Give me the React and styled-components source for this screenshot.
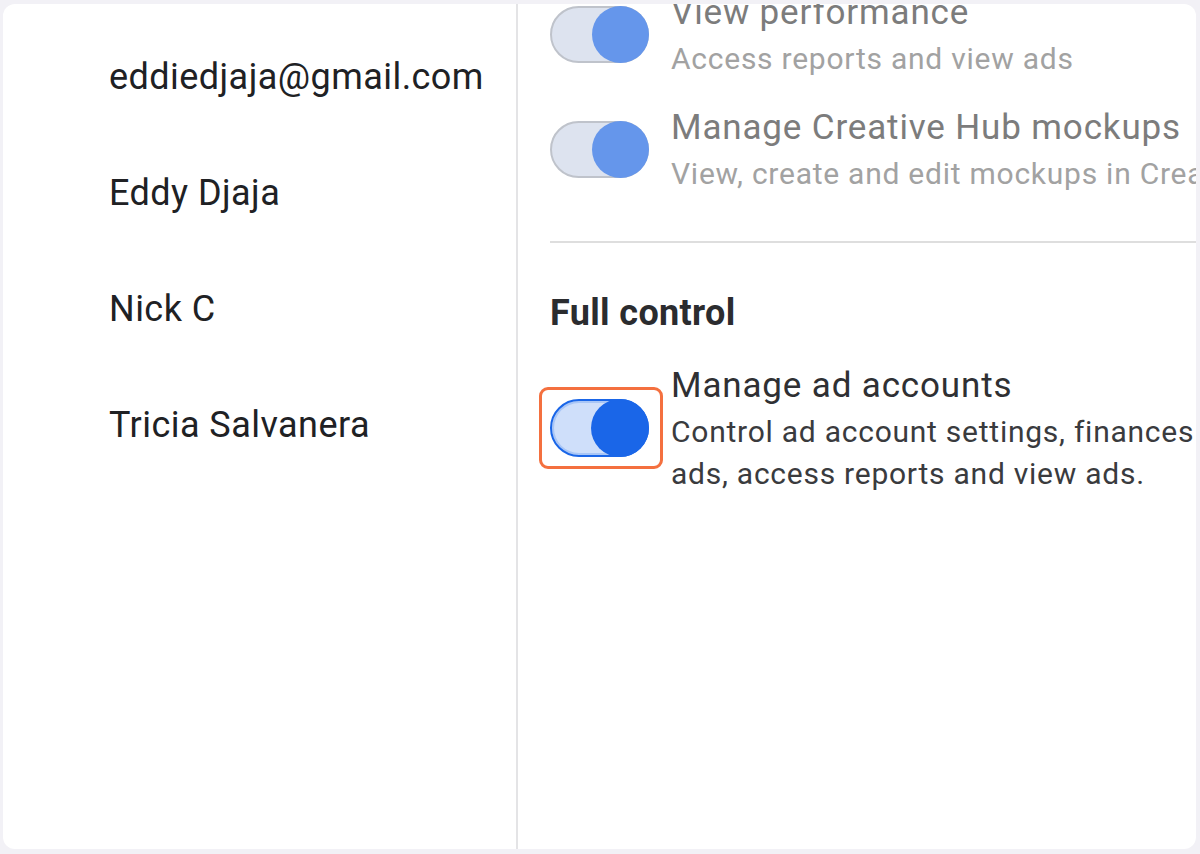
import React from 'react'
import styled, { createGlobalStyle, css } from 'styled-components'

const GlobalStyle = createGlobalStyle`
  html, body {
    margin: 0;
    padding: 0;
    background: #f2f1f6;
  }
  body {
    font-family: Roboto, "Liberation Sans", Arial, sans-serif;
  }
`

const Frame = styled.div`
  padding: 4px 4px 5px 3px;
`

const Card = styled.div`
  display: flex;
  height: 845px;
  background: #ffffff;
  border-radius: 12px;
  overflow: hidden;
`

const People = styled.ul`
  list-style: none;
  margin: 0;
  padding: 15px 0 0 106px;
  width: 515px;
  box-sizing: border-box;
  flex-shrink: 0;
  border-right: 2px solid #e4e4e6;
`

const Person = styled.li`
  height: 116px;
  line-height: 116px;
  font-size: 36px;
  letter-spacing: 0.45px;
  color: #202124;
  white-space: nowrap;
`

const Permissions = styled.div`
  flex: 1;
  min-width: 0;
  padding-left: 32px;
  margin-top: -16px;
`

const Item = styled.div`
  display: flex;
  align-items: center;
  gap: 22px;
  white-space: nowrap;
  & + & {
    margin-top: 23px;
  }
`

const Texts = styled.div`
  display: flex;
  flex-direction: column;
`

const Title = styled.div`
  font-size: 35px;
  line-height: 50px;
  letter-spacing: 0.85px;
  color: ${p => (p.$disabled ? '#7c7c7c' : '#2f3033')};
`

const Desc = styled.div`
  font-size: 30px;
  line-height: 42px;
  letter-spacing: 0.75px;
  color: ${p => (p.$disabled ? '#a2a2a2' : '#3a3b3e')};
`

const Track = styled.span`
  position: relative;
  display: block;
  flex-shrink: 0;
  width: 99px;
  height: 57px;
  box-sizing: border-box;
  border-radius: 29px;
  ${p =>
    p.$disabled
      ? css`
          background: #dde3ef;
          border: 2px solid #bfc3cb;
        `
      : css`
          height: 58px;
          background: #cfdffa;
          border: 2px solid #1a66e8;
          box-shadow: inset 0 0 0 2px #a9c6f6;
        `}
`

const Knob = styled.span`
  position: absolute;
  top: -2px;
  right: -2px;
  width: ${p => (p.$disabled ? '57px' : '58px')};
  height: ${p => (p.$disabled ? '57px' : '58px')};
  border-radius: 50%;
  background: ${p => (p.$disabled ? '#6596eb' : '#1a66e8')};
`

const FocusRing = styled.span`
  display: block;
  flex-shrink: 0;
  margin: -12px -14px -12px -11px;
  padding: 9px 11px 9px 8px;
  border: 3px solid #f4703f;
  border-radius: 9px;
`

const Divider = styled.hr`
  margin: 46px 0 0;
  border: 0;
  border-top: 2px solid #dedede;
`

const Heading = styled.h3`
  margin: 49px 0 27px;
  font-size: 36px;
  line-height: 42px;
  font-weight: 700;
  letter-spacing: 0.35px;
  color: #2b2c2f;
`

const people = ['eddiedjaja@gmail.com', 'Eddy Djaja', 'Nick C', 'Tricia Salvanera']

const partial = [
  { title: 'View performance', desc: ['Access reports and view ads'] },
  {
    title: 'Manage Creative Hub mockups',
    desc: ['View, create and edit mockups in Creative Hub'],
  },
]

const Toggle = ({ disabled }) => (
  <Track $disabled={disabled}>
    <Knob $disabled={disabled} />
  </Track>
)

const Permission = ({ title, desc, disabled, focused }) => (
  <Item>
    {focused ? (
      <FocusRing>
        <Toggle disabled={disabled} />
      </FocusRing>
    ) : (
      <Toggle disabled={disabled} />
    )}
    <Texts>
      <Title $disabled={disabled}>{title}</Title>
      {desc.map(line => (
        <Desc key={line} $disabled={disabled}>
          {line}
        </Desc>
      ))}
    </Texts>
  </Item>
)

export default function App() {
  return (
    <Frame>
      <GlobalStyle />
      <Card>
        <People>
          {people.map(name => (
            <Person key={name}>{name}</Person>
          ))}
        </People>
        <Permissions>
          {partial.map(p => (
            <Permission key={p.title} {...p} disabled />
          ))}
          <Divider />
          <Heading>Full control</Heading>
          <Permission
            title="Manage ad accounts"
            desc={['Control ad account settings, finances and permissions. Create and edit', 'ads, access reports and view ads.']}
            focused
          />
        </Permissions>
      </Card>
    </Frame>
  )
}
